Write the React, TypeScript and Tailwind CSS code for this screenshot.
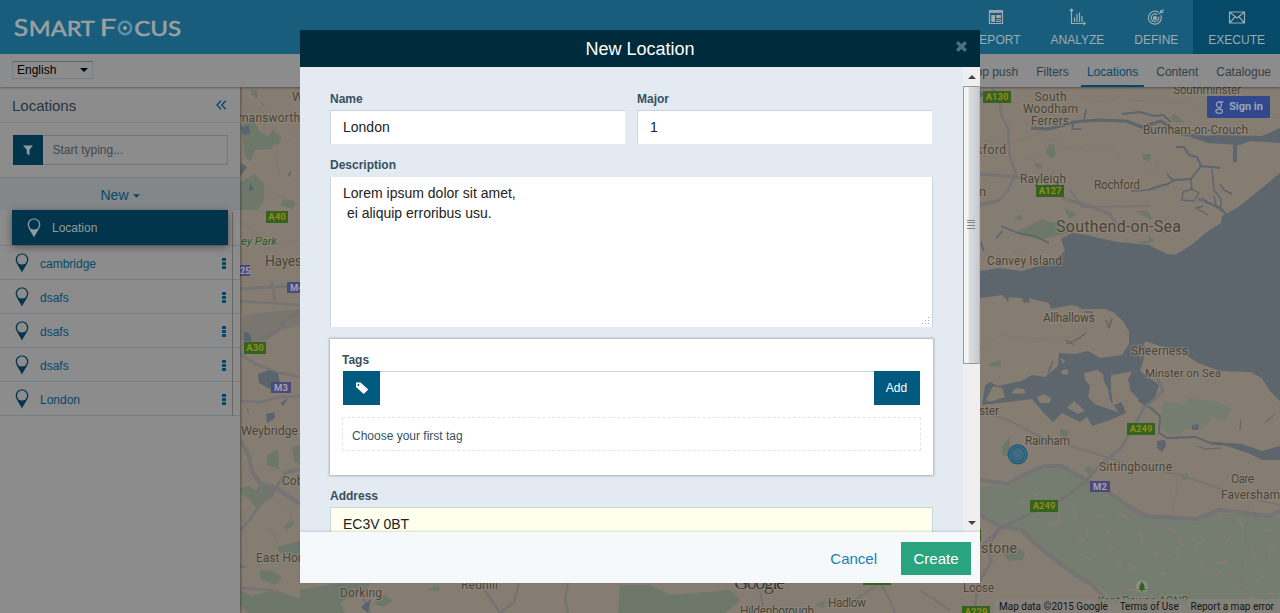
import React from "react";

type Label = { x: number; y: number; t: string; s?: number; w?: number };

const labels: Label[] = [
  { x: 292, y: 101, t: "Watford", s: 13 },
  { x: 238, y: 122, t: "mansworth", s: 12, w: 62 },
  { x: 265, y: 266, t: "Hayes", s: 14, w: 37 },
  { x: 241, y: 435, t: "Weybridge", s: 12.5, w: 57 },
  { x: 282, y: 485, t: "Cobham", s: 12 },
  { x: 256, y: 562, t: "East Horsley", s: 12 },
  { x: 340, y: 597, t: "Dorking", s: 12, w: 42 },
  { x: 461, y: 589, t: "Redhill", s: 12, w: 37 },
  { x: 740, y: 615, t: "Hildenborough", s: 12, w: 74 },
  { x: 828, y: 607, t: "Hadlow", s: 12, w: 38 },
  { x: 963, y: 592, t: "Loose", s: 12, w: 31 },
  { x: 1034.5, y: 101, t: "South", s: 12, w: 32 },
  { x: 1023, y: 113, t: "Woodham", s: 12, w: 55 },
  { x: 1031, y: 125, t: "Ferrers", s: 12, w: 38 },
  { x: 1173, y: 94, t: "Southminster", s: 12, w: 68 },
  { x: 1143, y: 134, t: "Burnham-on-Crouch", s: 12, w: 105 },
  { x: 966, y: 154, t: "ickford", s: 12, w: 40 },
  { x: 1020, y: 183, t: "Rayleigh", s: 12, w: 46 },
  { x: 1094, y: 188.500, t: "Rochford", s: 12, w: 46 },
  { x: 979, y: 196, t: "n", s: 13 },
  { x: 1056, y: 232, t: "Southend-on-Sea", s: 16, w: 125 },
  { x: 987, y: 265, t: "Canvey Island", s: 12, w: 75 },
  { x: 1043, y: 322, t: "Allhallows", s: 12, w: 52 },
  { x: 1131, y: 355, t: "Sheerness", s: 12, w: 57 },
  { x: 1145, y: 377, t: "Minster on Sea", s: 11.5, w: 76 },
  { x: 979, y: 415, t: "ster", s: 12, w: 20 },
  { x: 1025, y: 445, t: "Rainham", s: 12, w: 45 },
  { x: 1099, y: 471, t: "Sittingbourne", s: 12, w: 73 },
  { x: 1231, y: 483, t: "Oare", s: 12, w: 23 },
  { x: 1221, y: 499, t: "Faversham", s: 12, w: 59 },
  { x: 981, y: 553, t: "stone", s: 14, w: 36 },
];

const shields = [
  { x: 266, y: 211, t: "A40", w: 22 },
  { x: 244, y: 342, t: "A30", w: 22 },
  { x: 983, y: 91, t: "A130", w: 28 },
  { x: 1036, y: 185, t: "A127", w: 28 },
  { x: 1127, y: 423, t: "A249", w: 28 },
  { x: 1030, y: 500, t: "A249", w: 28 },
  { x: 962, y: 606, t: "A229", w: 28 },
  { x: 863, y: 573, t: "A26", w: 28 },
  { x: 960, y: 529, t: "M20", w: 21 },
];

const motorways = [
  { x: 232, y: 265, t: "M25", w: 18 },
  { x: 287, y: 282, t: "M4", w: 20 },
  { x: 271, y: 382, t: "M3", w: 20 },
  { x: 1090, y: 481, t: "M2", w: 20 },
];

const inlets: [string, number][] = [
  ["M1031 128L1048 129L1065 125L1074 122L1098 120L1126 121L1142 127L1161 121L1180 134L1198 136L1230 141L1280 136", 3],
  ["M1122 114L1140 112L1154 116L1163 115L1171 122", 2],
  ["M1235 140L1235 162", 4],
  ["M1074 121L1072 129L1082 129M1084 120L1086 109", 1.5],
  ["M1148 190L1160 186L1168 184L1174 180L1191 179L1201 166L1220 168M1201 166L1197 157L1189 155L1184 147L1176 147", 2],
  ["M1191 180L1192 189L1183 192L1182 200L1194 201L1199 193L1190 188M1212 169L1214 190L1221 199L1221 208M1202 198L1211 204L1221 208L1227 215M1220 184L1224 190L1232 194M1203 206L1196 208L1208 215", 1.4],
  ["M1173 181L1167 174M1148 190L1131 191", 1.4],
  ["M1001 226L1018 233L1035 236L1049 243M1002 231L996 239M981 242L984 252", 1.6],
  ["M1198 199L1212 204L1226 214M1205 202L1216 206L1214 196", 1.4],
  ["M1066 344L1076 340L1086 333M1066 340L1074 345M1106 320L1109 328L1112 318M1084 312L1092 312L1092 319M1048 373L1053 361", 1.3],
  ["M1138 400L1152 409L1160 416L1159 433L1167 438L1196 437L1212 444L1240 445L1262 456L1280 458", 1.8],
  ["M1197 446L1206 449L1222 448M1240 430L1241 420M1265 423L1275 414", 1],
  ["M1145 347L1141 363L1136 379L1131 391M1131 373L1139 375", 3],
];

const roads: [string, number][] = [
  ["M992 87L999 99L1002 117L1008 128L1010 157L1016 174L1008 190L999 200L980 206", 2.5],
  ["M980 174L1017 177L1043 180L1065 199L1092 207L1110 214L1116 224", 3],
  ["M980 204L995 201L1000 200M1070 190L1082 207L1150 206", 1.5],
  ["M980 350L1000 335L1025 338L1060 340L1090 328", 1],
  ["M980 480L1008 484L1025 474L1044 466L1062 466L1086 480L1110 493L1128 506L1146 516L1197 519L1219 510L1270 516L1280 511", 4],
  ["M980 548L998 530L1017 520L1060 500L1084 483L1098 467L1121 448L1137 421L1144 407L1154 400L1163 391L1159 382L1155 375", 3],
  ["M980 515L1000 526L1021 530L1045 552L1070 571L1091 584L1107 600", 4],
  ["M998 530L988 548L991 562L978 583L974 613", 3],
  ["M980 410L1010 421L1040 437L1100 455L1130 465L1180 475L1245 497L1280 505", 1.5],
  ["M1178 471L1175 500L1171 520M1250 500L1245 540L1240 590M1252 505L1268 560", 1],
  ["M240 289L270 287L300 286M272 281L275 300", 3],
  ["M240 301L300 305M300 310L286 320L277 331L254 342M240 354L255 364L276 372L300 377M240 401L260 402L280 397L300 396", 2.5],
  ["M240 440L249 456L252 472L260 483L276 488L300 504", 4],
  ["M276 488L258 507L250 520L240 530M276 488L285 473L300 469", 3],
  ["M240 468L300 472M268 524L278 544L270 548M255 500L244 514L247 550M275 500L292 512L286 530", 1],
  ["M240 106L262 111L281 137L275 152L280 175M300 126L286 145M240 192L260 188L300 205M240 220L262 238L280 244L300 240", 1],
  ["M240 588L270 590L300 600L344 583L360 590L370 613M480 583L500 613M519 583L514 602L500 613M568 583L565 599L568 613", 2.5],
  ["M740 583L760 590L764 613M855 600L880 583L890 600L895 613M920 590L950 610", 2],
  ["M1130 87L1110 103L1080 96M980 140L1010 143L1040 133L1070 150L1090 145L1120 153M1130 100L1210 105L1280 115M1020 160L1040 157M1160 160L1150 175M980 280L1020 248", 1],
];

const islands = [
  "M986 400L993 386L1002 388L1005 397L990 402Z",
  "M1011 393L1016 388L1024 389L1026 393L1018 394Z",
  "M1037 397L1044 394L1051 398L1050 403L1040 403Z",
  "M1062 370L1068 369L1068 375L1061 374ZM1061 358L1065 361L1062 364Z",
  "M1084 373L1097 370L1103 374L1104 381L1108 389L1110 400L1119 413L1109 409L1096 405L1088 397L1090 386L1085 380Z",
  "M1111 375L1118 374L1133 371L1128 379L1131 391L1145 406L1138 408L1126 401L1113 405L1111 390Z",
  "M1067 408L1074 401L1085 411L1078 414Z",
];

const greens = [
  "M240 127L252 117L260 132L276 139L272 149L255 150L250 162L246 158ZM240 183L254 174L264 183L264 200L258 210L240 210Z",
  "M265 143L278 145L281 138L273 129ZM284 199L295 201L293 209L280 205ZM250 88L257 91L258 98L252 96Z",
  "M1046 152L1049 144L1054 145L1056 155L1052 159L1047 155ZM1143 154L1151 154L1150 161L1143 160ZM1170 118L1174 113L1180 119L1185 122L1178 123ZM1034 164L1041 163L1042 168L1037 169Z",
  "M1015 232L1027 227L1042 219L1050 222L1060 223L1072 225L1068 233L1050 237L1042 240L1020 235Z",
  "M1135 211L1149 211L1152 220L1142 215ZM1137 242L1148 241L1150 236L1154 241L1146 244ZM1064 208L1077 214L1069 219ZM1013 218L1022 215L1022 221ZM989 364L1000 360L1001 366L991 367ZM1173 359L1180 360L1177 367L1173 364Z",
  "M1003 445L1010 437L1010 457L1002 454ZM1060 429L1069 431L1066 440L1060 436ZM1084 469L1090 466L1092 471L1088 474ZM1183 474L1188 473L1186 480L1182 480ZM1003 552L1010 545L1025 552L1023 560L1008 561Z",
  "M240 488L249 486L256 491L260 484L275 490L273 497L260 505L254 506L250 500L240 493ZM284 526L294 519L293 526L286 530ZM240 564L248 567L240 569ZM260 570L273 571L282 578L275 585L260 579ZM277 547L300 541L300 556L280 553Z",
  "M240 590L252 596L270 591L300 599L300 613L248 613L240 605ZM292 447L300 445L300 465L294 460ZM268 454L278 450L279 469L266 465Z",
  "M300 590L345 582L370 583L365 592L352 595L340 603L345 613L300 613ZM374 603L384 594L393 601L382 607ZM427 590L438 585L440 591ZM620 585L650 585L670 595L730 590L740 600L725 613L618 613ZM815 605L825 600L824 608Z",
];

const paleGreens = [
  "M1164 401L1185 405L1188 398L1217 402L1232 409L1225 420L1212 416L1202 430L1185 429L1179 436L1166 434L1160 424Z",
  "M980 486L1010 486L1027 474L1046 466L1065 469L1110 494L1140 516L1200 520L1215 513L1280 517L1280 613L1120 613L1104 590L1062 565L1040 543L1022 529L1003 524L980 512Z",
];

const forest = "M1071 509L1076 514L1074 520M1058 517L1060 524M1050 525L1056 522M1120 514L1130 519M1035 495L1040 492M1240 520L1242 526M1108 532L1105 536M1087 531L1088 536M1196 545L1204 540M1154 555L1160 552M1130 569L1135 567M1234 588L1241 585M1201 568L1203 563M1265 531L1270 530M1168 528L1174 530M1086 557L1090 560M1260 575L1264 577M1128 589L1136 590M1187 596L1186 601M1018 504L1023 502M1253 551L1255 555M1140 533L1141 539M1218 563L1226 562M1180 541L1183 545M1226 541L1230 537M1215 576L1219 573M1160 576L1164 573M1110 551L1113 547M1150 602L1158 601M1246 600L1252 597M1271 550L1275 547M1269 592L1273 594M1118 560L1121 563M1098 515L1102 517M1080 543L1083 540M1175 560L1178 557";

function MapCanvas() {
  return (
    <svg className="block h-full w-full" viewBox="240 87 1040 526" fontFamily="Roboto, sans-serif">
      <rect x="240" y="87" width="1040" height="526" fill="#857c72" />
      <g fill="#6d786b">{greens.map((d) => <path key={d} d={d} />)}</g>
      <g fill="#757c70">{paleGreens.map((d) => <path key={d} d={d} />)}</g>
      <path d={forest} fill="none" stroke="#837c71" strokeWidth="3.2" strokeLinecap="round" strokeLinejoin="round" />
      <path d="M243 315L300 309L300 325L279 331L266 341L241 340Z" fill="#7b756f" />
      <g fill="#5d656d">
        <path d="M1280 173L1262 188L1236 209L1245 203L1228 213L1222 216L1221 223L1207 232L1190 246L1175 255L1167 254L1149 245L1118 242L1098 238L1087 235L1072 233L1061 239L1065 251L1052 262L1022 271L1000 268L980 271L980 298L1002 295L1006 299L1008 302L1009 297L1022 298L1024 303L1030 302L1029 298L1049 303L1051 309L1071 305L1077 306L1082 309L1105 309L1113 312L1123 321L1129 331L1129 344L1122 355L1100 358L1088 351L1075 354L1059 353L1058 366L1045 377L1032 375L1022 381L998 386L990 382L985 386L982 405L1032 399L1044 413L1053 422L1062 413L1080 422L1087 417L1092 426L1110 420L1126 413L1121 400L1145 408L1155 397L1159 385L1140 371L1140 355L1145 341L1160 346L1180 351L1198 363L1220 371L1250 372L1262 378L1269 390L1280 401Z" />
        <path d="M1206 441L1226 443L1242 444L1262 451L1280 446L1280 460L1262 460L1248 453L1230 447Z" />
        <path d="M1157 441L1165 440L1166 446L1162 452L1157 448ZM1192 425L1199 424L1198 430L1192 430Z" />
        <path d="M1190 137L1218 135L1262 136L1280 128L1280 143L1250 141L1240 145L1208 143Z" />
      </g>
      <g fill="#857c72">{islands.map((d) => <path key={d} d={d} />)}</g>
      <path d="M1148 346L1160 349L1185 358L1198 366L1190 385L1164 398L1159 385L1150 378L1150 362Z" fill="#857c72" />
      <g fill="none" stroke="#5d656d" strokeLinejoin="round">
        {inlets.map(([d, w]) => <path key={d} d={d} strokeWidth={w} />)}
      </g>
      <g fill="none" stroke="#737273" strokeLinejoin="round">
        {roads.map(([d, w]) => <path key={d} d={d} strokeWidth={w} strokeOpacity={w === 1 ? 0.35 : 0.9} />)}
      </g>
      <g fill="#59646f">
        <path d="M258 374L269 370L278 373L280 383L270 389L259 383Z" />
        <path d="M244 331L250 334L252 342L244 341ZM241 128L249 125L250 134L243 135ZM241 163L247 167L240 176ZM250 182L254 190L249 191ZM288 174L292 170L289 177ZM261 102L267 108L262 104ZM266 414L274 412L275 418L267 423ZM242 400L248 410L250 415ZM281 403L288 398L283 406ZM1197 88L1203 93M980 90L984 94L980 98ZM361 607L371 599L368 613Z" />
      </g>
      <g fill="#4b4534" stroke="#918a80" strokeWidth="2.5" strokeOpacity=".65" paintOrder="stroke">
        {labels.map((l) => (
          <text key={l.t + l.y} x={l.x} y={l.y} fontSize={l.s ?? 12} textLength={l.w} strokeLinejoin="round">{l.t}</text>
        ))}
        <g fontStyle="italic" fill="#2e5a20">
          <text x="241" y="245" fontSize="11.5" textLength="36">ey Park</text>
          <text x="1097" y="605" fontSize="12" textLength="91" fill="#3f5636">Kent Downs AONB</text>
        </g>
      </g>
      <g fontWeight="700" fontSize="9.5" textAnchor="middle">
        {shields.map((s, i) => (
          <g key={i}>
            <rect x={s.x} y={s.y} width={s.w} height="12" fill="#36621f" />
            <text x={s.x + s.w / 2} y={s.y + 9.3} fill="#8e8c1c">{s.t}</text>
          </g>
        ))}
        {motorways.map((s, i) => (
          <g key={i}>
            <rect x={s.x} y={s.y} width={s.w} height="11" fill="#4c4a7d" />
            <text x={s.x + s.w / 2} y={s.y + 9} fill="#a3a1ad">{s.t}</text>
          </g>
        ))}
      </g>
      <text x="734" y="589" fontSize="20" fontFamily="Liberation Serif, serif" textLength="51" fill="#38352f" stroke="#938c83" strokeWidth="1.5" paintOrder="stroke">Google</text>
      <circle cx="1017.7" cy="454.3" r="8" fill="#3f6a80" />
      <circle cx="1017.7" cy="454.3" r="9.3" fill="none" stroke="#125a80" strokeWidth="1.5" />
      <circle cx="1017.7" cy="454.3" r="7" fill="none" stroke="#185f83" strokeWidth="1.3" />
      <circle cx="1142" cy="586.5" r="6.2" fill="#8b8d80" />
      <path d="M1142 581.5L1145 587H1143.7L1145.7 590H1142.6V592H1141.4V590H1138.3L1140.3 587H1139Z" fill="#315f20" />
    </svg>
  );
}

function Logo() {
  return (
    <svg width="172" height="30" viewBox="12 14 172 30" fill="#9c9fa1" fontFamily="Lato, sans-serif" stroke="#9c9fa1" strokeWidth=".55" className="overflow-visible">
      <text x="13.8" y="35.5" fontSize="24" textLength="14.500" lengthAdjust="spacingAndGlyphs">S</text>
      <text x="28.8" y="35.5" fontSize="20.5" textLength="66" lengthAdjust="spacingAndGlyphs">MART</text>
      <text x="99.8" y="35.5" fontSize="24" textLength="16.500" lengthAdjust="spacingAndGlyphs">F</text>
      <circle cx="125" cy="28" r="6.2" fill="none" stroke="#5c8fa5" strokeWidth="2.5" />
      <circle cx="125" cy="28" r="2" stroke="none" />
      <text x="134.2" y="35.5" fontSize="20.5" textLength="47" lengthAdjust="spacingAndGlyphs">CUS</text>
    </svg>
  );
}

function NavIcon({ name }: { name: string }) {
  const c = "#9eabb1";
  return (
    <svg width="20" height="20" viewBox="0 0 20 20" fill="none" stroke={c} strokeWidth="1.2" className="block">
      {name === "REPORT" && (
        <>
          <path d="M3.5 3.5H16.500V16.500H3.500Z" /><path d="M3.500 5H16.500" strokeWidth="1.800" />
          <path d="M5.300 8H9V15H5.300ZM10.200 8H15V11H10.200Z" fill={c} stroke="none" /><path d="M10.700 12.600H14.500V14.500H10.700Z" strokeWidth="1" />
        </>
      )}
      {name === "ANALYZE" && <path d="M4.5 2.200V16.5H18M2.800 4L4.5 2.200L6.200 4M16.5 14.800L18.200 16.5L16.5 18.200M7.500 15V10.500M10 15V7M12.500 15V5.500M15 15V9" />}
      {name === "DEFINE" && (
        <>
          <path d="M12.700 5.400A6.500 6.500 0 1 0 14.900 8.200M11.300 7.700A3.800 3.800 0 1 0 12.600 9.600M13 7.200L17.600 2.500M14.800 2.900V5.500H17.400" />
          <circle cx="9" cy="11" r="1.5" fill={c} />
        </>
      )}
      {name === "EXECUTE" && <path d="M2.500 5H17.500V16H2.500ZM3 5.500L10 11L17 5.500M3 15.500L8 9.800M17 15.500L12 9.800" />}
    </svg>
  );
}

function Pin({ light }: { light?: boolean }) {
  const c = light ? "#8e9ba1" : "#02344c";
  return (
    <svg width="14" height="20" viewBox="0 0 14 20" className="block shrink-0">
      <path d="M7 .5C3.2.5.7 3.2.7 6.5C.7 10 4.5 14 7 19.5C9.500 14 13.300 10 13.300 6.500C13.300 3.200 10.800.5 7 .5Z" fill={c} />
      <circle cx="7" cy="6.600" r="5" fill={light ? "#02344c" : "#8c8c8c"} />
    </svg>
  );
}

const nav = ["REPORT", "ANALYZE", "DEFINE", "EXECUTE"];
const tabs = ["App push", "Filters", "Locations", "Content", "Catalogue"];
const places = ["cambridge", "dsafs", "dsafs", "dsafs", "London"];

function Field({ label, value }: { label: string; value: string }) {
  return (
    <div className="flex w-[295px] flex-col">
      <label className="h-[18px] text-xs leading-[15px] font-bold">{label}</label>
      <div className="h-[34px] border-t border-l border-[#c9d5dd] bg-white pl-3 text-sm leading-[33px] text-[#222]">{value}</div>
    </div>
  );
}

function Modal() {
  return (
    <div className="absolute top-[30px] left-[300px] z-50 flex h-[553px] w-[680px] flex-col bg-[#e3eaf1] text-[#37505f]">
      <div className="relative h-[37px] shrink-0 bg-[#002b3d] text-center text-lg leading-[38px] text-white">
        New Location
        <svg className="absolute top-[11px] right-[13px]" width="11" height="11" viewBox="0 0 11 11" stroke="#50707e" strokeWidth="3.4">
          <path d="M1.200 1.200L9.800 9.800M9.800 1.200L1.200 9.800" />
        </svg>
      </div>
      <div className="flex h-[465px] shrink-0 overflow-hidden">
        <div className="flex w-[663px] flex-col pt-[25px] pl-[30px]">
          <div className="flex shrink-0 gap-3">
            <Field label="Name" value="London" />
            <Field label="Major" value="1" />
          </div>
          <label className="mt-[14px] h-[19px] shrink-0 text-xs leading-[15px] font-bold">Description</label>
          <div className="relative h-[150px] w-[603px] shrink-0 border-r border-l border-[#c9d5dd] bg-white px-3 pt-[6px] text-sm leading-5 whitespace-pre text-[#222]">
            {"Lorem ipsum dolor sit amet,\n ei aliquip erroribus usu."}
            <svg className="absolute right-[2px] bottom-[2px]" width="8" height="8" fill="#a5a5a5">
              <path d="M6 0h1v1h-1zM6 3h1v1h-1zM3 3h1v1h-1zM6 6h1v1h-1zM3 6h1v1h-1zM0 6h1v1h-1z" />
            </svg>
          </div>
          <div className="mt-3 flex h-[136px] w-[603px] shrink-0 flex-col bg-white px-3 pt-[14px] shadow-[0_0_2px_1px_#a9b2b9]">
            <label className="h-[18px] text-xs leading-[14px] font-bold">Tags</label>
            <div className="ml-px flex h-[34px] w-[577px]">
              <div className="flex w-[37px] items-center justify-center bg-[#005a80]">
                <svg width="14" height="14" viewBox="0 0 14 14">
                  <path fillRule="evenodd" d="M1 1.500H5.500L12.800 8.100Q13.200 8.600 12.800 9L9.200 12.500Q8.700 12.900 8.200 12.500L1 6ZM3.400 3A1 1 0 1 0 3.400 5A1 1 0 1 0 3.400 3Z" fill="#fff" />
                </svg>
              </div>
              <div className="grow border-t border-[#c9d5dd]" />
              <div className="w-[46px] bg-[#005a80] pr-px text-center text-xs leading-[35px] text-white">Add</div>
            </div>
            <div className="mt-3 h-[34px] border border-dashed border-[#e0e5e7] pl-[9px] text-xs leading-[37px]">Choose your first tag</div>
          </div>
          <label className="mt-[15px] h-[17px] shrink-0 text-xs leading-[13px] font-bold">Address</label>
          <div className="h-[34px] w-[603px] shrink-0 border border-[#c9d5dd] bg-[#ffffee] pl-3 text-sm leading-[33px] text-[#222]">EC3V 0BT</div>
        </div>
        <div className="flex w-[17px] flex-col items-center bg-[#efefef]">
          <div className="flex h-[19px] w-full items-center justify-center">
            <svg width="8" height="4"><path d="M0 4L4 0L8 4Z" fill="#444" /></svg>
          </div>
          <div className="flex h-[278px] w-full items-center justify-center rounded-[1px] border border-[#979797] border-r-[#b8b9bd] bg-linear-to-r from-[#f4f4f4] from-25% via-[#dcdddf] via-35% to-[#c7c8cc] pr-[2px] pb-[2px]">
            <svg width="8" height="9" stroke="#838589"><path d="M0 .5H8M0 2.500H8M0 5.500H8M0 8.500H8" /></svg>
          </div>
          <div className="flex grow items-end pb-[7px]">
            <svg width="8" height="4"><path d="M0 0L4 4L8 0Z" fill="#444" /></svg>
          </div>
        </div>
      </div>
      <div className="z-10 flex h-[51px] shrink-0 items-center justify-end gap-[24px] bg-[#f5f9fc] pt-[2px] pr-[9px] text-[15px] shadow-[0_-1px_2px_#00000022]">
        <span className="text-[#1681ba]">Cancel</span>
        <div className="h-[33px] w-[70px] bg-[#2aa37f] text-center leading-[34px] text-white">Create</div>
      </div>
    </div>
  );
}

export default function App() {
  return (
    <div className="relative flex h-[613px] w-[1280px] flex-col overflow-hidden bg-[#8c8c8c] font-['Liberation_Sans',Arial,sans-serif] text-xs text-[#26343c]">
      <header className="flex h-[54px] shrink-0 justify-between bg-[#185e7c]">
        <div className="pt-[14px] pl-3"><Logo /></div>
        <nav className="flex text-[#9eabb1]">
          {nav.map((n) => (
            <div key={n} className={n === "EXECUTE" ? "flex flex-col items-center bg-[#054a68] px-[15px] pt-[7px]" : "flex flex-col items-center px-[15px] pt-[7px]"}>
              <NavIcon name={n} />
              <span className="mt-[5px] leading-4">{n}</span>
            </div>
          ))}
        </nav>
      </header>
      <div className="z-10 flex h-[33px] shrink-0 justify-between bg-[#8c8c8c] pr-[9px] pl-3 shadow-[0_1px_2px_#0005]">
        <div className="mt-[7px] flex h-[18px] w-[81px] items-center justify-between rounded-[1px] border border-[#777f84] border-t-[#5d6368] pr-1 pl-1 text-xs text-black">
          English
          <svg width="8" height="4"><path d="M0 0H8L4 4Z" fill="#000" /></svg>
        </div>
        <div className="flex gap-[6px] text-[#343f46]">
          {tabs.map((t) => (
            <span key={t} className={t === "Locations" ? "h-[33px] border-b-2 border-[#02496b] px-[6px] leading-[36px] text-[#02496b]" : t === "Catalogue" ? "pl-[6px] leading-[36px]" : "px-[6px] leading-[36px]"}>{t}</span>
          ))}
        </div>
      </div>
      <div className="flex grow">
        <aside className="z-[5] flex w-60 shrink-0 flex-col bg-[#8c8c8c] shadow-[1px_0_2px_#0005]">
          <div className="flex h-[36px] items-center justify-between border-b border-[#7f8284] pr-[13px] pl-[12px] text-[15px]">
            <span className="pt-[2px]">Locations</span>
            <svg width="11" height="10" viewBox="0 0 11 10" fill="none" stroke="#034a6c" strokeWidth="1.300"><path d="M5 .7L1 5L5 9.300M9.700.7L5.700 5L9.700 9.300" /></svg>
          </div>
          <div className="h-[55px] border-b border-[#73797d] pt-3 pl-[13px]">
            <div className="flex h-[30px] w-[215px]">
              <div className="flex w-[30px] items-center justify-center bg-[#02344c]">
                <svg width="10" height="11" fill="#8e9ba1"><path d="M0 .5H10L6.500 4.800V10.500L3.700 8.500V4.800Z" /></svg>
              </div>
              <div className="grow border border-l-0 border-[#6c7983] pl-[9.5px] leading-[29px] text-[#40484d]">Start typing...</div>
            </div>
          </div>
          <div className="flex h-[32px] items-center justify-center gap-1 bg-[#848789] pt-px text-sm text-[#03496b]">
            New <svg width="7" height="4" className="mt-[3px]"><path d="M0 .3H7L3.500 3.800Z" fill="#03496b" /></svg>
          </div>
          <div className="relative">
            <div className="h-[36px] border-b border-[#777c80]">
              <div className="relative z-10 mx-3 flex h-[35px] items-center gap-[11px] bg-[#02344c] pl-[15px] text-[#929da2] shadow-[0_2px_8px_#0006]"><Pin light />Location</div>
            </div>
            {places.map((p, i) => (
              <div key={i} className="flex h-[34px] items-center border-b border-[#777c80] pr-[14px] pl-[15px] text-[#03496b]">
                <Pin />
                <span className="grow pt-[3px] pl-[11px]">{p}</span>
                <svg width="4" height="12" fill="#03496b" className="mt-[3px]"><path d="M0 0h4v3h-4zM0 4h4v3h-4zM0 8h4v3h-4z" /></svg>
              </div>
            ))}
            <div className="absolute top-[2px] right-[7px] h-[204px] w-px bg-[#686868]" />
          </div>
        </aside>
        <main className="relative h-[526px] w-[1040px] overflow-hidden">
          <MapCanvas />
          <div className="absolute top-[9px] right-[10px] flex h-[22px] w-[63px] items-center gap-[5px] rounded-[1px] bg-[#31498c] pl-2 text-[11px] text-[#9ba3b8]">
            <svg width="9" height="13" viewBox="0 0 9 13" fill="none" stroke="#9ba3b8" strokeWidth="1.200"><ellipse cx="4" cy="3.700" rx="2.500" ry="2.800" /><path d="M4.500.8H8.500M5.500 6.500Q3.500 7.200 6 8.300" /><ellipse cx="4.200" cy="10.200" rx="3.300" ry="2.100" /></svg>
            <span className="pt-px font-[Roboto] font-bold">Sign in</span>
          </div>
          <div className="absolute right-0 bottom-0 flex h-[14px] w-[286px] justify-between bg-[#86827dcc] pr-[6px] pl-[5px] font-[Roboto] text-[10px] leading-[15px] whitespace-nowrap text-[#171717]">
            <span>Map data ©2015 Google</span><span>Terms of Use</span><span>Report a map error</span>
          </div>
        </main>
      </div>
      <Modal />
    </div>
  );
}
